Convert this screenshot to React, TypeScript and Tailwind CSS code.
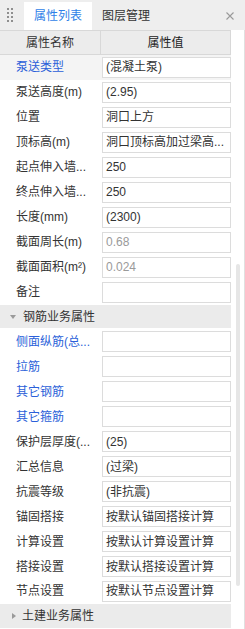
import React from 'react';

type Row = {
  name: string;
  value: string;
  link?: boolean;
  selected?: boolean;
  disabled?: boolean;
};

const baseRows: Row[] = [
  { name: '泵送类型', value: '(混凝土泵)', link: true, selected: true },
  { name: '泵送高度(m)', value: '(2.95)' },
  { name: '位置', value: '洞口上方' },
  { name: '顶标高(m)', value: '洞口顶标高加过梁高...' },
  { name: '起点伸入墙...', value: '250' },
  { name: '终点伸入墙...', value: '250' },
  { name: '长度(mm)', value: '(2300)' },
  { name: '截面周长(m)', value: '0.68', disabled: true },
  { name: '截面面积(m²)', value: '0.024', disabled: true },
  { name: '备注', value: '' },
];

const rebarRows: Row[] = [
  { name: '侧面纵筋(总...', value: '', link: true },
  { name: '拉筋', value: '', link: true },
  { name: '其它钢筋', value: '', link: true },
  { name: '其它箍筋', value: '', link: true },
  { name: '保护层厚度(...', value: '(25)' },
  { name: '汇总信息', value: '(过梁)' },
  { name: '抗震等级', value: '(非抗震)' },
  { name: '锚固搭接', value: '按默认锚固搭接计算' },
  { name: '计算设置', value: '按默认计算设置计算' },
  { name: '搭接设置', value: '按默认搭接设置计算' },
  { name: '节点设置', value: '按默认节点设置计算' },
];

function PropRow({ row }: { row: Row }) {
  return (
    <div className={`h-[25px] flex items-center ${row.selected ? 'bg-[#f4f4f4]' : ''}`}>
      <div
        className={`w-[102px] pl-[16px] pr-[2px] whitespace-nowrap overflow-hidden ${
          row.link ? 'text-[#2b5fd9]' : 'text-[#333]'
        }`}
      >
        {row.name}
      </div>
      <div className="flex-1 h-[21px] border border-[#dcdcdc] bg-white flex items-center pl-[3px] whitespace-nowrap overflow-hidden">
        <span className={row.disabled ? 'text-[#9a9a9a]' : 'text-[#333]'}>{row.value}</span>
      </div>
    </div>
  );
}

function GroupRow({ title, open }: { title: string; open: boolean }) {
  return (
    <div className="h-[25px] pb-[1px]">
      <div className="h-full bg-[#ebebeb] flex items-center">
        {open ? (
          <div className="ml-[10px] w-0 h-0 border-x-[3px] border-x-transparent border-t-[4px] border-t-[#9a9a9a]" />
        ) : (
          <div className="ml-[12px] w-0 h-0 border-y-[3px] border-y-transparent border-l-[4px] border-l-[#9a9a9a]" />
        )}
        <span className={open ? 'ml-[7px] text-[#333]' : 'ml-[6px] text-[#333]'}>{title}</span>
      </div>
    </div>
  );
}

export default function App() {
  return (
    <div className="w-[245px] h-[629px] overflow-hidden flex flex-col bg-white text-[12px] text-[#333] font-['Liberation_Sans','Noto_Sans_CJK_SC',sans-serif]">
      {/* Tabs */}
      <div className="h-[30px] shrink-0 flex bg-[#eeeeee]">
        <div className="w-[24px] pl-[7px] pt-[8px]">
          <div className="grid grid-cols-2 gap-x-[2px] gap-y-[2px] w-[6px]">
            {Array.from({ length: 8 }).map((_, i) => (
              <div key={i} className="w-[2px] h-[2px] bg-[#8f8f8f]" />
            ))}
          </div>
        </div>
        <div className="mt-[2px] w-[68px] bg-white flex items-center justify-center text-[#2f7fe8]">
          属性列表
        </div>
        <div className="ml-[10px] mt-[2px] flex items-center">图层管理</div>
        <div className="flex-1" />
        <div className="pr-[11px] flex items-center pt-[1px]">
          <svg width="8" height="8" viewBox="0 0 8 8">
            <path d="M0.5 0.5 L7.5 7.5 M7.5 0.5 L0.5 7.5" stroke="#9a9a9a" strokeWidth="1.1" />
          </svg>
        </div>
      </div>

      {/* Property grid */}
      <div className="flex-1 min-h-0 flex border-r border-[#e0e0e0]">
        <div className="w-[231px] flex flex-col">
          <div className="h-[25px] shrink-0 flex bg-[#ececec] border-y border-r border-[#d8d8d8]">
            <div className="w-[101px] border-r border-[#d8d8d8] flex items-center justify-center">
              属性名称
            </div>
            <div className="flex-1 flex items-center justify-center text-[#222]">属性值</div>
          </div>
          {baseRows.map((r, i) => (
            <PropRow key={i} row={r} />
          ))}
          <GroupRow title="钢筋业务属性" open />
          {rebarRows.map((r, i) => (
            <PropRow key={i} row={r} />
          ))}
          <GroupRow title="土建业务属性" open={false} />
        </div>
        <div className="flex-1">
          <div className="ml-[5px] mt-[234px] w-[4px] h-[322px] rounded-full bg-[#e6e6e6]" />
        </div>
      </div>
    </div>
  );
}
